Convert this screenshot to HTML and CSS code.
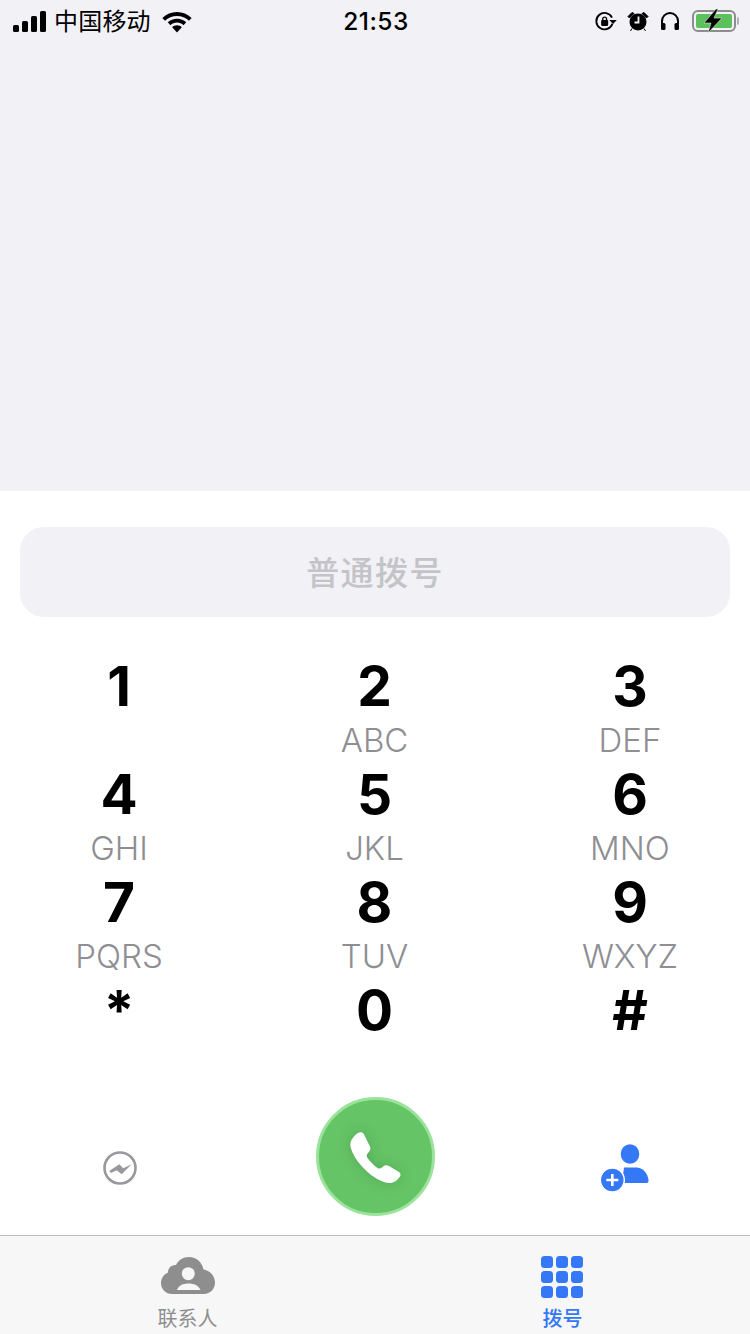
FILE: index.html
```html
<!DOCTYPE html>
<html lang="zh-CN">
<head>
<meta charset="utf-8">
<title>拨号</title>
<link rel="stylesheet" href="styles.css">
</head>
<body>
<div class="page">
  <section class="top">
    <header class="status">
      <div class="status-left">
        <svg class="sig" width="34" height="21" viewBox="0 0 34 21"><rect x="0" y="14" width="6" height="7" rx="1.5"/><rect x="9" y="10" width="6" height="11" rx="1.5"/><rect x="18" y="5" width="6" height="16" rx="1.500"/><rect x="27" y="0" width="6" height="21" rx="1.500"/></svg>
        <span class="carrier">中国移动</span>
        <svg class="wifi" width="32" height="23" viewBox="0 0 30 22"><path d="M15 2C9.600 2 4.700 4.100 1 7.600l2.500 2.700C6.500 7.400 10.500 5.700 15 5.700s8.500 1.700 11.500 4.600L29 7.600C25.300 4.100 20.400 2 15 2z"/><path d="M15 8.300c-3.400 0-6.500 1.300-8.800 3.500l2.500 2.700c1.700-1.500 3.900-2.500 6.300-2.500s4.600 1 6.300 2.500l2.500-2.700c-2.300-2.200-5.400-3.500-8.800-3.500z"/><path d="M15 14.600c-1.800 0-3.400.7-4.600 1.800L15 21.500l4.600-5.100c-1.200-1.100-2.800-1.800-4.600-1.800z"/></svg>
      </div>
      <div class="clock">21:53</div>
      <div class="status-right">
        <svg class="lock" width="26" height="24" viewBox="0 0 24 22"><path d="M17.900 13.500A7.600 7.600 0 1 1 17.500 7.800" fill="none" stroke="#000" stroke-width="1.700"/><path d="M15 10h7l-3.500 3.800z"/><rect x="7.500" y="10" width="6.500" height="5.500" rx="1"/><path d="M9 10V8.800a1.800 1.800 0 0 1 3.500 0V10" fill="none" stroke="#000" stroke-width="1.300"/></svg>
        <svg width="22" height="22" viewBox="0 0 22 22"><circle cx="11" cy="12" r="8.500"/><path d="M1 6.500 5 2.500 7 3.500 2.500 8zM21 6.500 17 2.500 15 3.500 19.500 8zM5 18.500 3.500 21M17 18.500 18.500 21" stroke="#000" stroke-width="1"/><path d="M11.500 6.500v6H7.500" fill="none" stroke="#f1f1f6" stroke-width="1.800"/></svg>
        <svg width="22" height="22" viewBox="0 0 22 22"><path d="M3 14V11a8 8 0 0 1 16 0v3" fill="none" stroke="#000" stroke-width="2"/><rect x="2" y="13" width="4.500" height="7" rx="1.500"/><rect x="15.500" y="13" width="4.500" height="7" rx="1.500"/></svg>
        <div class="battery">
          <div class="battery-body"><div class="battery-fill"></div></div>
          <div class="battery-cap"></div>
          <svg class="bolt" width="24" height="26" viewBox="0 0 24 26"><path d="M15 1 3 15h7L7 25 21 10h-8L17 1z" fill="#000" stroke="#d8efd8" stroke-width=".6"/></svg>
        </div>
      </div>
    </header>
  </section>
  <section class="dialer">
    <div class="number-box">普通拨号</div>
    <div class="keypad">
      <div class="key"><span class="digit">1</span><span class="letters"></span></div>
      <div class="key"><span class="digit">2</span><span class="letters">ABC</span></div>
      <div class="key"><span class="digit">3</span><span class="letters">DEF</span></div>
      <div class="key"><span class="digit">4</span><span class="letters">GHI</span></div>
      <div class="key"><span class="digit">5</span><span class="letters">JKL</span></div>
      <div class="key"><span class="digit">6</span><span class="letters">MNO</span></div>
      <div class="key"><span class="digit">7</span><span class="letters">PQRS</span></div>
      <div class="key"><span class="digit">8</span><span class="letters">TUV</span></div>
      <div class="key"><span class="digit">9</span><span class="letters">WXYZ</span></div>
      <div class="key"><span class="digit">*</span><span class="letters"></span></div>
      <div class="key"><span class="digit">0</span><span class="letters"></span></div>
      <div class="key"><span class="digit">#</span><span class="letters"></span></div>
    </div>
    <div class="actions">
      <div class="action">
        <svg width="36" height="36" viewBox="0 0 36 36"><circle cx="18" cy="18" r="15.500" fill="none" stroke="#98989d" stroke-width="2.600"/><path d="M7.300 21 17.300 14.300 21.300 18.300 29.700 14.300 19.700 24.300 14.700 20.300 9 23z" fill="#98989d"/></svg>
      </div>
      <div class="call">
        <svg class="handset" width="60" height="60" viewBox="0 0 60 60"><path d="M13 6C15 4.800 17.500 5 18.800 7L25 19.500C25.800 21.500 25.300 23.500 24 24.700L22.500 26.500C21.500 27.800 21.500 29.500 22.500 31 25.500 35 29 38.500 32.500 41 34 42 35.700 41.700 37 40.500L38.500 39.200C40 38 42 38 44 39L54 45C55.500 46 56 48 55 49.500 52.500 53.500 48 56.500 43.500 56 36 55 27.500 50 20 42.500 12.500 35 7 27 5.500 19.500 4.500 14.500 8.500 9 13 6Z" fill="#fff"/></svg>
      </div>
      <div class="action">
        <svg width="60" height="50" viewBox="0 0 60 50"><ellipse cx="30" cy="11" rx="9.300" ry="9.800" fill="#3478f6"/><path d="M24 24.500H36C43 24.500 47.500 30 48.500 37Q48.800 40 46.500 40H22z" fill="#3478f6"/><circle cx="12.300" cy="37" r="12" fill="#3478f6" stroke="#fff" stroke-width="1.500"/><path d="M12.300 31v12M6.300 37h12" stroke="#fff" stroke-width="2.600"/></svg>
      </div>
    </div>
  </section>
  <nav class="tabs">
    <div class="tab">
      <svg class="cloud" width="54" height="42" viewBox="0 -1 54 42"><path d="M11 37C4.500 37 0 32 0 26 0 20.500 3.500 17 7 15.500 7 10.500 10.500 8 15 8 17.500 3 22 0 28 0 35.500 0 41 5 42.500 12.500 48.500 13.500 54 18.500 54 25.500 54 32 49 37 43 37Z" fill="#8e8e8e"/><circle cx="27.300" cy="16.700" r="6.500" fill="#f7f7f7"/><path d="M16 33C17.500 28.500 22 26.500 27.500 26.500S37.500 28.500 39.500 33Z" fill="#f7f7f7"/></svg>
      <span class="tab-label">联系人</span>
    </div>
    <div class="tab tab-active">
      <div class="grid-icon"><i></i><i></i><i></i><i></i><i></i><i></i><i></i><i></i><i></i></div>
      <span class="tab-label">拨号</span>
    </div>
  </nav>
</div>
</body>
</html>
```

FILE: styles.css
```css
* { box-sizing: border-box; }
html, body { margin: 0; padding: 0; }
body { width: 750px; height: 1334px; overflow: hidden; background: #fff; font-family: "Inter", "Noto Sans CJK SC", sans-serif; }
.page { display: flex; flex-direction: column; width: 750px; height: 1334px; }

.top { height: 491px; flex: none; background: #f1f1f6; }
.status { display: grid; grid-template-columns: 1fr auto 1fr; align-items: center; height: 42px; padding: 0 11px 0 13px; color: #000; }
.status-left { display: flex; align-items: center; gap: 8px; }
.sig { margin-right: -1px; }
.carrier { font-family: "Noto Sans CJK SC", sans-serif; font-size: 24px; line-height: 30px; letter-spacing: .2px; padding-bottom: 2px; }
.wifi { margin-left: 2px; }
.clock { font-family: "Inter", sans-serif; font-size: 24.500px; font-weight: 500; letter-spacing: .5px; }
.status-right { display: flex; justify-content: flex-end; align-items: center; gap: 10px; }
.lock { margin-right: -2px; }
.battery { position: relative; display: flex; align-items: center; margin-left: 1px; }
.battery-body { width: 44px; height: 22px; border: 2px solid #8d8d8d; border-radius: 6px; padding: 2px; }
.battery-fill { height: 100%; background: #5cc05c; border-radius: 2px; }
.battery-cap { width: 2px; height: 8px; margin-left: 1px; background: #b0b0b0; border-radius: 0 2px 2px 0; }
.bolt { position: absolute; left: 9px; top: -2px; }

.dialer { flex: 1; display: flex; flex-direction: column; background: #fff; }
.number-box { height: 90px; margin: 36px 20px 0; border-radius: 24px; background: #f1f1f6; color: #c4c4c8; font-family: "Noto Sans CJK SC", sans-serif; font-size: 33px; font-weight: 500; line-height: 88px; text-align: center; letter-spacing: 1.400px; }

.keypad { display: grid; grid-template-columns: repeat(3, 120px); justify-content: space-between; grid-auto-rows: 108px; padding: 32px 60px 0 59px; }
.key { display: flex; flex-direction: column; align-items: center; }
.digit { font-family: "Inter", sans-serif; font-size: 55px; font-weight: 700; line-height: 74px; color: #000; }
.letters { font-family: "Inter", sans-serif; font-size: 33px; font-weight: 300; line-height: 34px; color: #8e8e93; white-space: nowrap; }

.actions { display: grid; grid-template-columns: repeat(3, 120px); justify-content: space-between; align-items: center; justify-items: center; padding: 0 60px; margin-top: 16px; }
.action { display: flex; align-items: center; justify-content: center; width: 120px; padding-top: 22px; }
.call { display: flex; align-items: center; justify-content: center; width: 119px; height: 119px; border-radius: 50%; background: #65c466; border: 3px solid #9be29c; }
.handset { filter: drop-shadow(0 0 7px rgba(0, 0, 0, .14)); }

.tabs { flex: none; display: flex; height: 99px; margin-top: auto; background: #f7f7f7; border-top: 1px solid #bdbdbd; }
.tab { flex: 1; display: flex; flex-direction: column; align-items: center; padding-top: 20px; }
.cloud { display: block; }
.tab-label { font-family: "Noto Sans CJK SC", sans-serif; font-size: 20px; line-height: 26px; margin-top: 7px; color: #8e8e8e; }
.tab-active .tab-label { color: #3478f6; font-weight: 500; }
.grid-icon { display: grid; grid-template-columns: repeat(3, 12px); grid-auto-rows: 12px; gap: 3px; height: 42px; margin-right: 1px; }
.grid-icon i { display: block; background: #3478f6; border-radius: 3.500px; }
```
